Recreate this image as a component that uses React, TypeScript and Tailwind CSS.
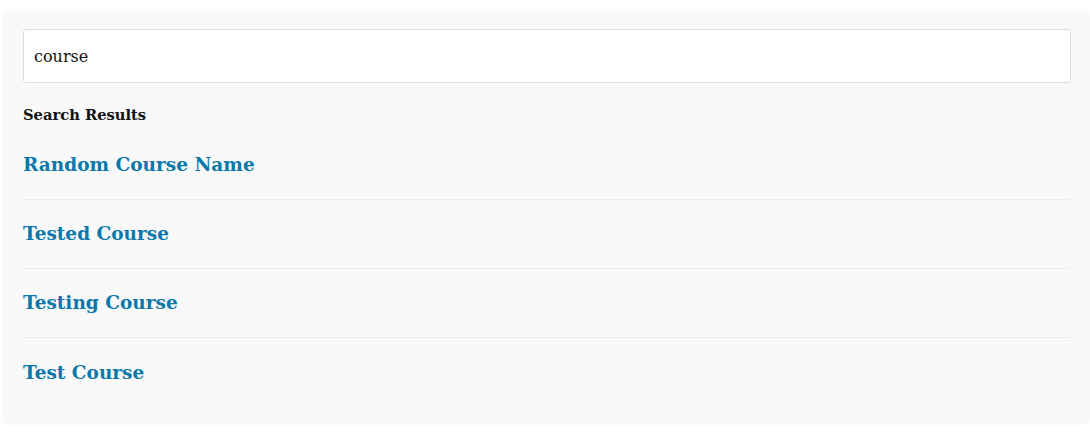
const results = ["Random Course Name", "Tested Course", "Testing Course", "Test Course"];

export default function App() {
  return (
    <div className="min-h-screen bg-white pt-[9px] pl-[3px]" style={{ fontFamily: '"DejaVu Serif", "Liberation Serif", serif' }}>
      <div className="bg-[#f9f9f9] rounded-md pl-5 pr-[19px] pt-5 pb-[18px]">
        <input
          type="text"
          defaultValue="course"
          className="block w-full h-[54px] px-[10px] bg-white border border-[#dcdcdc] rounded-[3px] text-[16px] text-[#111] outline-none"
        />
        <h3 className="mt-[20px] text-[14.7px] font-bold text-[#111] leading-[24px]">Search Results</h3>
        <ul className="mt-[4px]">
          {results.map((name, i) => (
            <li
              key={name}
              className={`h-[69px] flex items-center ${i < results.length - 1 ? "border-b border-[#ececec]" : ""}`}
            >
              <a href="#" className="text-[18.5px] font-bold text-[#0a78aa]">
                {name}
              </a>
            </li>
          ))}
        </ul>
      </div>
    </div>
  );
}
